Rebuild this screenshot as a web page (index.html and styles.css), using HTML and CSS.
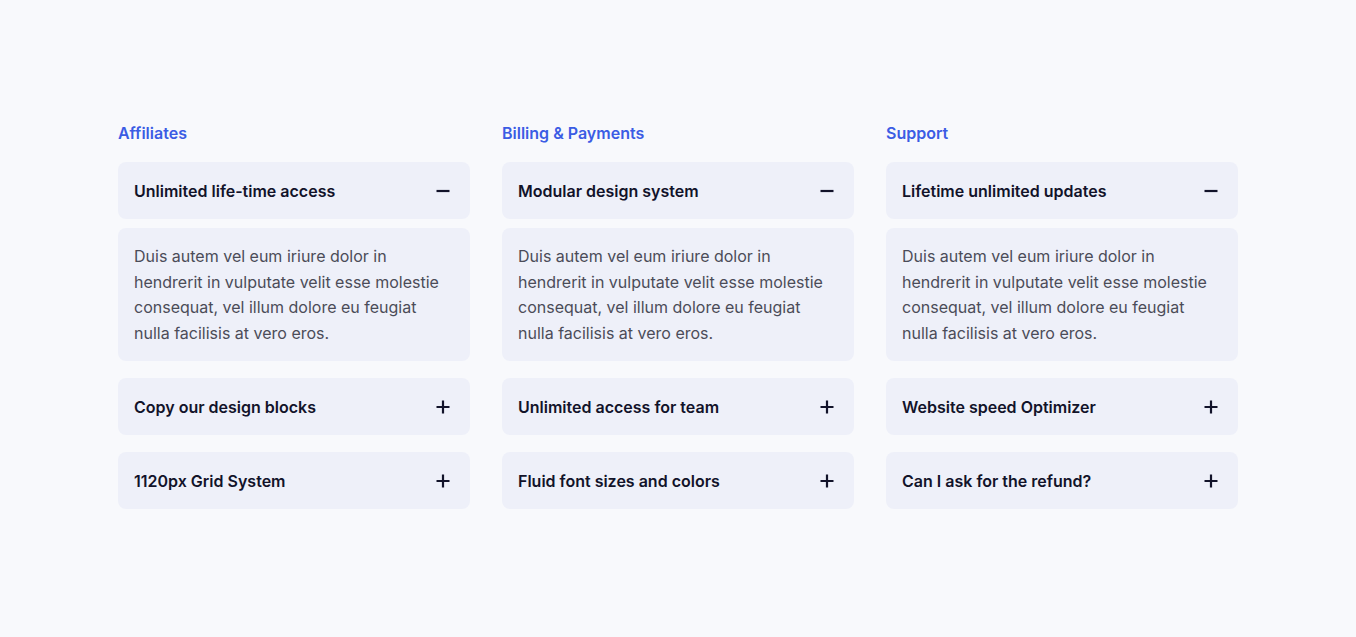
FILE: index.html
```html
<!DOCTYPE html>
<html lang="en">
<head>
<meta charset="utf-8">
<title>FAQ</title>
<link rel="stylesheet" href="styles.css">
</head>
<body>
<main class="faq">
  <section class="col">
    <h2 class="col-title">Affiliates</h2>
    <div class="item open">
      <div class="q"><span>Unlimited life-time access</span><svg class="ic" viewBox="0 0 20 20"><path d="M3.5 10h13"/></svg></div>
      <div class="a">Duis autem vel eum iriure dolor in hendrerit in vulputate velit esse molestie consequat, vel illum dolore eu feugiat nulla facilisis at vero eros.</div>
    </div>
    <div class="item">
      <div class="q"><span>Copy our design blocks</span><svg class="ic" viewBox="0 0 20 20"><path d="M3.5 10h13M10 3.5v13"/></svg></div>
    </div>
    <div class="item">
      <div class="q"><span>1120px Grid System</span><svg class="ic" viewBox="0 0 20 20"><path d="M3.5 10h13M10 3.5v13"/></svg></div>
    </div>
  </section>
  <section class="col">
    <h2 class="col-title">Billing &amp; Payments</h2>
    <div class="item open">
      <div class="q"><span>Modular design system</span><svg class="ic" viewBox="0 0 20 20"><path d="M3.5 10h13"/></svg></div>
      <div class="a">Duis autem vel eum iriure dolor in hendrerit in vulputate velit esse molestie consequat, vel illum dolore eu feugiat nulla facilisis at vero eros.</div>
    </div>
    <div class="item">
      <div class="q"><span>Unlimited access for team</span><svg class="ic" viewBox="0 0 20 20"><path d="M3.5 10h13M10 3.5v13"/></svg></div>
    </div>
    <div class="item">
      <div class="q"><span>Fluid font sizes and colors</span><svg class="ic" viewBox="0 0 20 20"><path d="M3.5 10h13M10 3.5v13"/></svg></div>
    </div>
  </section>
  <section class="col">
    <h2 class="col-title">Support</h2>
    <div class="item open">
      <div class="q"><span>Lifetime unlimited updates</span><svg class="ic" viewBox="0 0 20 20"><path d="M3.5 10h13"/></svg></div>
      <div class="a">Duis autem vel eum iriure dolor in hendrerit in vulputate velit esse molestie consequat, vel illum dolore eu feugiat nulla facilisis at vero eros.</div>
    </div>
    <div class="item">
      <div class="q"><span>Website speed Optimizer</span><svg class="ic" viewBox="0 0 20 20"><path d="M3.5 10h13M10 3.5v13"/></svg></div>
    </div>
    <div class="item">
      <div class="q"><span>Can I ask for the refund?</span><svg class="ic" viewBox="0 0 20 20"><path d="M3.5 10h13M10 3.5v13"/></svg></div>
    </div>
  </section>
</main>
</body>
</html>
```
FILE: styles.css
```css
* { box-sizing: border-box; }
html, body { margin: 0; padding: 0; }
body {
  background: #f8f9fc;
  font-family: Inter, "Noto Sans", sans-serif;
  min-height: 637px;
}
.faq {
  width: 1120px;
  margin: 0 auto;
  padding-top: 121px;
  display: grid;
  grid-template-columns: repeat(3, 1fr);
  column-gap: 32px;
}
.col {
  display: flex;
  flex-direction: column;
  gap: 17px;
}
.col-title {
  margin: 0;
  font-size: 16px;
  line-height: 24px;
  font-weight: 600;
  color: #3b5ce4;
}
.item {
  display: flex;
  flex-direction: column;
  gap: 9px;
}
.q {
  background: #eef0f9;
  border-radius: 8px;
  height: 57px;
  padding: 0 16px;
  display: flex;
  align-items: center;
  justify-content: space-between;
  font-size: 16px;
  font-weight: 600;
  color: #12132a;
}
.ic {
  width: 20px;
  height: 20px;
  fill: none;
  stroke: #12132a;
  stroke-width: 2.2;
  margin-right: 1px;
}
.a {
  background: #eef0f9;
  border-radius: 8px;
  padding: 16px 16px 15px;
  font-size: 16px;
  line-height: 25.5px;
  color: #4b4c58;
}
```
